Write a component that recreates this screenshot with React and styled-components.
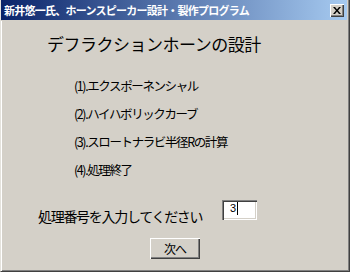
import React from "react"
import styled, { createGlobalStyle } from "styled-components"

const Global = createGlobalStyle`
  html, body {
    margin: 0;
    padding: 0;
    background: #d4d0c8;
  }
`

const jp = `"Noto Sans CJK JP", "Noto Sans", sans-serif`

const Window = styled.div`
  width: 350px;
  height: 272px;
  box-sizing: border-box;
  background: #d4d0c8;
  border-left: 1px solid #e4e2dc;
  border-right: 1px solid #404040;
  border-bottom: 1px solid #404040;
  box-shadow: inset 1px 0 0 #ffffff, inset -1px -1px 0 #808080;
  display: flex;
  flex-direction: column;
  font-family: ${jp};
  color: #000;
`

const TitleBar = styled.div`
  height: 20px;
  margin-right: 2px;
  display: flex;
  align-items: center;
  justify-content: space-between;
  padding: 0 3px 0 3px;
  background: linear-gradient(to right, #0a246a, #a6caf0);
  border-bottom: 1px solid #d4d0c8;
`

const Title = styled.span`
  color: #fff;
  font-weight: bold;
  font-size: 11px;
  letter-spacing: -0.75px;
  white-space: nowrap;
`

const CloseButton = styled.div`
  width: 14px;
  height: 13px;
  background: #d4d0c8;
  display: flex;
  align-items: center;
  justify-content: center;
  box-shadow: inset 1px 1px 0 #ffffff, inset -1px -1px 0 #404040, inset -2px -2px 0 #808080;
`

const Body = styled.div`
  flex: 1;
  display: flex;
  flex-direction: column;
`

const Heading = styled.div`
  margin: 13px 0 0 46px;
  font-size: 17px;
  line-height: 20px;
  letter-spacing: -0.5px;
`

const List = styled.div`
  margin: 18px 0 0 73px;
  display: flex;
  flex-direction: column;
`

const Item = styled.div`
  height: 28px;
  line-height: 28px;
  font-size: 12.5px;
  letter-spacing: -1.4px;
`

const PromptRow = styled.div`
  margin: 16px 0 0 37px;
  display: flex;
  align-items: flex-start;
`

const Prompt = styled.span`
  width: 184px;
  margin-top: 6px;
  font-size: 14px;
  line-height: 20px;
  letter-spacing: -1.3px;
  white-space: nowrap;
`

const Field = styled.div`
  width: 35px;
  height: 20px;
  box-sizing: border-box;
  background: #fff;
  padding: 1px 0 0 8px;
  display: flex;
  align-items: flex-start;
  font-family: "Liberation Sans", sans-serif;
  font-size: 11px;
  line-height: 14px;
  box-shadow: inset 1px 1px 0 #808080, inset 2px 2px 0 #404040, inset -1px -1px 0 #ffffff, inset -2px -2px 0 #d4d0c8;
`

const Caret = styled.span`
  width: 1px;
  height: 13px;
  margin: 1px 0 0 1px;
  background: #000;
`

const Button = styled.div`
  margin: 12px 0 0 149px;
  width: 50px;
  height: 21px;
  box-sizing: border-box;
  display: flex;
  align-items: center;
  justify-content: center;
  font-size: 12px;
  letter-spacing: -1px;
  background: #d4d0c8;
  box-shadow: inset 1px 1px 0 #ffffff, inset -1px -1px 0 #404040, inset -2px -2px 0 #808080;
`

const items = [
  "(1).エクスポーネンシャル",
  "(2).ハイハボリックカーブ",
  "(3).スロートナラビ半径Rの計算",
  "(4).処理終了",
]

export default function App() {
  return (
    <>
      <Global />
      <Window>
        <TitleBar>
          <Title>新井悠一氏、ホーンスピーカー設計・製作プログラム</Title>
          <CloseButton>
            <svg width="8" height="7" viewBox="0 0 8 7">
              <path d="M0 0h2l2 2.5L6 0h2L5 3.5 8 7H6L4 4.5 2 7H0l3-3.5z" fill="#000" />
            </svg>
          </CloseButton>
        </TitleBar>
        <Body>
          <Heading>デフラクションホーンの設計</Heading>
          <List>
            {items.map((t) => (
              <Item key={t}>{t}</Item>
            ))}
          </List>
          <PromptRow>
            <Prompt>処理番号を入力してください</Prompt>
            <Field>
              3
              <Caret />
            </Field>
          </PromptRow>
          <Button>次へ</Button>
        </Body>
      </Window>
    </>
  )
}
